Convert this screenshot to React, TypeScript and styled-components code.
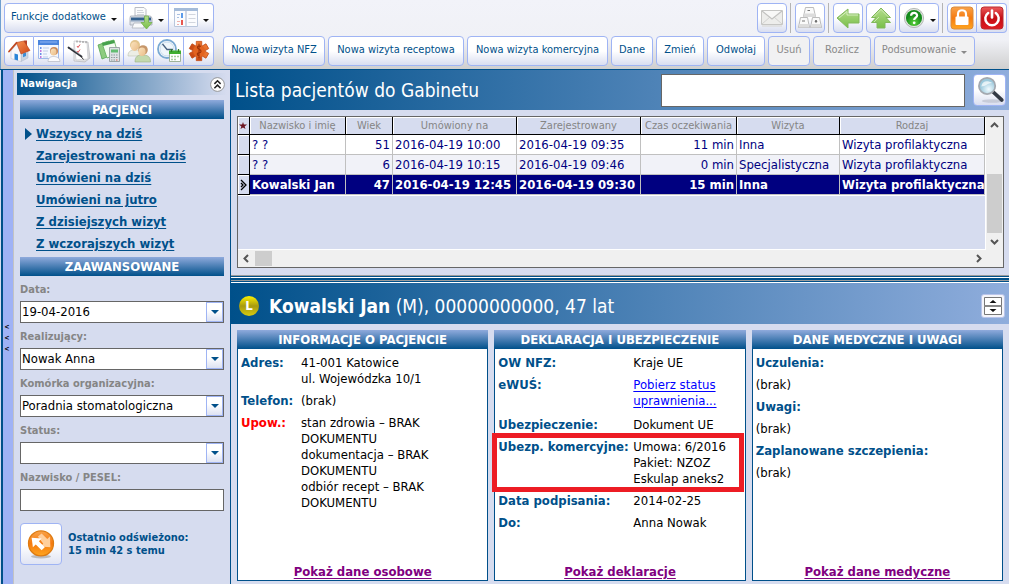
import React from "react";
import styled, { createGlobalStyle, css } from "styled-components";

const navy = "#00508a";
const panel = "#d6dcef";
const edge = "#9fb4f4";

const Global = createGlobalStyle`
  *, *::before, *::after { box-sizing: border-box; }
  html, body { margin: 0; height: 100%; }
  body {
    background: ${panel};
    font-family: "DejaVu Sans Condensed", Tahoma, "DejaVu Sans", sans-serif;
    font-size: 13px;
    line-height: 16px;
    color: #000;
  }
  button, input, select { font: inherit; color: inherit; margin: 0; }
  svg { display: block; }
`;

const Page = styled.div`
  display: flex;
  flex-direction: column;
  min-height: 100vh;
`;

/* ---------- toolbars ---------- */

const Toolbars = styled.header`
  display: flex;
  flex-direction: column;
  gap: 3px;
  padding: 3px 2px 3px 3px;
  border-left: 1px solid #6f9fd0;
  background: linear-gradient(#f2f3f9 0, #f0f1f6 40px, #cfcfcf 100%);
`;

const ToolRow = styled.div`
  display: flex;
  align-items: center;
  height: 30px;
  gap: 3px;
`;

const Spacer = styled.div<{ $w?: number }>`
  ${(p) => (p.$w ? `width: ${p.$w}px;` : "flex: 1;")}
`;

const Separator = styled.div`
  width: 1px;
  height: 30px;
  margin-right: 1px;
  background: #b4b4b4;
`;

const ToolButton = styled.button<{ $w?: number }>`
  display: flex;
  align-items: center;
  justify-content: center;
  gap: 5px;
  height: 30px;
  ${(p) => p.$w && `width: ${p.$w}px;`}
  flex: none;
  padding: 0 4px 2px;
  border: 1px solid ${edge};
  border-radius: 4px;
  background: linear-gradient(#fff 50%, #d9def0);
  font-size: 11px;
  line-height: 16px;
  white-space: nowrap;
  color: ${navy};
  &:disabled {
    background: #f1f1f2;
    color: #8a8a8a;
  }
`;

const IconButton = styled(ToolButton)`
  width: ${(p) => p.$w ?? 30}px;
  padding: 0;
`;

const ButtonGroup = styled.div`
  display: flex;
  > button { border-radius: 0; }
  > button:not(:first-child) { border-left: 0; }
  > button:first-child { border-radius: 4px 0 0 4px; }
  > button:last-child { border-radius: 0 4px 4px 0; }
`;

const Caret = styled.span`
  width: 0;
  height: 0;
  margin-top: 4px;
  border: 3px solid transparent;
  border-top-color: currentColor;
  border-bottom: 0;
`;

const DarkCaret = styled(Caret)`
  border-top-color: #111;
`;

/* ---------- work area ---------- */

const Work = styled.div`
  display: flex;
  flex: 1;
  padding-left: 1px;
  border-top: 1px solid ${navy};
`;

const Collapse = styled.button`
  display: flex;
  flex-direction: column;
  align-items: center;
  justify-content: center;
  width: 13px;
  padding: 22px 2px 0 0;
  border: solid #c3c3c3;
  border-width: 0 1px;
  border-left: 2px solid ${navy};
  background: #9fb2f5;
  font-size: 7px;
  line-height: 11px;
  font-weight: bold;
`;

const Sidebar = styled.aside`
  display: flex;
  flex-direction: column;
  width: 216px;
  padding: 3px 3px 0;
`;

const SideHead = styled.div`
  display: flex;
  align-items: center;
  justify-content: space-between;
  height: 22px;
  padding: 0 2px 0 3px;
  background: linear-gradient(to right, ${navy}, ${panel});
  color: #fff;
  font-size: 11px;
  font-weight: bold;
`;

const RoundButton = styled.button`
  display: flex;
  width: 15px;
  height: 15px;
  padding: 0;
  border: 0;
  background: none;
`;

const SideBody = styled.div`
  display: flex;
  flex-direction: column;
  padding: 5px 3px 0;
`;

const SectionBar = styled.h2`
  margin: 0;
  height: 19px;
  background: linear-gradient(#8faadc, ${navy});
  color: #fff;
  text-align: center;
  font-size: 13px;
  line-height: 19px;
  font-weight: bold;
  white-space: nowrap;
`;

const NavList = styled.ul`
  margin: 0;
  padding: 4px 0 2px 5px;
  list-style: none;
`;

const NavItem = styled.li<{ $active?: boolean }>`
  display: flex;
  align-items: center;
  height: 22px;
  &::before {
    content: "";
    width: 11px;
    border: 6px solid transparent;
    border-right: 0;
    border-left: 7px solid ${(p) => (p.$active ? navy : "transparent")};
  }
`;

const NavLink = styled.a`
  color: ${navy};
  font-weight: bold;
  text-underline-offset: 2px;
`;

const Filters = styled.form`
  display: flex;
  flex-direction: column;
`;

const FieldLabel = styled.label`
  height: 25px;
  padding-top: 6px;
  color: #858585;
  font-size: 11px;
  font-weight: bold;
`;

const fieldBox = css`
  width: 100%;
  height: 22px;
  border: 1px solid #666;
  border-radius: 0;
  background: #fff;
`;

const SelectBox = styled.div`
  position: relative;
  display: flex;
`;

const Select = styled.select`
  ${fieldBox}
  appearance: none;
  padding: 0 20px 0 1px;
  font-size: 13px;
`;

const DropMark = styled.span`
  position: absolute;
  top: 1px;
  right: 1px;
  bottom: 1px;
  display: flex;
  align-items: center;
  justify-content: center;
  width: 17px;
  border: 1px solid ${edge};
  background: linear-gradient(#fff 40%, #dde2f2);
  pointer-events: none;
  &::after {
    content: "";
    border: 4px solid transparent;
    border-top-color: ${navy};
    border-bottom: 0;
  }
`;

const TextInput = styled.input`
  ${fieldBox}
  padding: 0 3px;
`;

const Refresh = styled.div`
  display: flex;
  align-items: center;
  gap: 6px;
  padding-top: 12px;
  color: ${navy};
  font-size: 11px;
  line-height: 13px;
  font-weight: bold;
`;

const RefreshButton = styled(IconButton)`
  width: 42px;
  height: 42px;
  background: linear-gradient(#fff 50%, #e0e4f3);
`;

const Main = styled.main`
  display: flex;
  flex: 1;
  flex-direction: column;
  min-width: 0;
  border-left: 1px solid ${navy};
`;

const Banner = styled.div`
  display: flex;
  align-items: center;
  height: 40px;
  padding: 0 3px 0 4px;
  background: linear-gradient(to right, ${navy}, #8faddc);
  color: #fff;
`;

const Heading = styled.h1`
  flex: 1;
  margin: 0;
  font-size: 19px;
  line-height: 24px;
  font-weight: normal;
  white-space: nowrap;
`;

const SearchInput = styled.input`
  width: 304px;
  height: 33px;
  margin-right: 8px;
  padding: 0 6px;
  border: 1px solid #666;
  background: #fff;
  color: #000;
`;

const SearchButton = styled(IconButton)`
  width: 33px;
  height: 32px;
`;

/* ---------- patient list ---------- */

const ListArea = styled.section`
  padding: 6px 5px 7px 6px;
`;

const ListFrame = styled.div`
  display: grid;
  grid-template-columns: minmax(0, 1fr) 17px;
  grid-template-rows: 133px 17px;
  border: 1px solid #666;
  overflow: hidden;
`;

const TableView = styled.div`
  overflow: hidden;
  border-right: 1px solid #fff;
  border-bottom: 1px solid #fff;
`;

const Table = styled.table`
  width: 100%;
  table-layout: fixed;
  border-collapse: separate;
  border-spacing: 0;
  border-bottom: 1px solid #fff;
`;

const HeadCell = styled.th`
  height: 18px;
  padding: 0;
  overflow: hidden;
  border-right: 1px solid #000;
  border-bottom: 1px solid #000;
  box-shadow: inset 1px 1px #fff;
  color: #858585;
  font-size: 11px;
  line-height: 16px;
  font-weight: normal;
  white-space: nowrap;
`;

const Row = styled.tr<{ $alt?: boolean; $selected?: boolean }>`
  background: ${(p) => (p.$selected ? "#000080" : p.$alt ? "#f1f2f8" : "#fff")};
  color: ${(p) => (p.$selected ? "#fff" : "#000080")};
  font-weight: ${(p) => (p.$selected ? "bold" : "normal")};
`;

const Cell = styled.td<{ $right?: boolean }>`
  height: 20px;
  padding: 1px 2px 0;
  overflow: hidden;
  border-right: 1px solid #c0c0c0;
  border-bottom: 1px solid #c0c0c0;
  font-size: 13px;
  line-height: 16px;
  text-align: ${(p) => (p.$right ? "right" : "left")};
  white-space: nowrap;
`;

const Marker = styled.td`
  padding: 0 0 0 2px;
  border-right: 1px solid #000;
  border-bottom: 1px solid #000;
  box-shadow: inset 1px 1px #fff;
  background: ${panel};
`;

const ScrollV = styled.div`
  display: flex;
  flex-direction: column;
  align-items: center;
  justify-content: space-between;
  padding: 4px 1px;
  background: #f0f0f0;
`;

const ThumbV = styled.div`
  width: 15px;
  height: 59px;
  margin-top: 40px;
  background: #cdcdcd;
`;

const ScrollH = styled.div`
  display: flex;
  grid-column: 1 / -1;
  align-items: center;
  gap: 4px;
  padding: 0 20px 0 4px;
  background: #f0f0f0;
`;

const ThumbH = styled.div`
  width: 17px;
  height: 15px;
  background: #cdcdcd;
`;

/* ---------- patient card ---------- */

const Splitter = styled.div`
  height: 8px;
  background: linear-gradient(
    #9a9a9a 1px, ${navy} 1px 2px, #fff 2px 3px, ${navy} 3px 5px,
    #9a9a9a 5px 6px, ${navy} 6px 7px, #fff 7px
  );
`;

const PatientBanner = styled(Banner)`
  height: 41px;
  padding: 4px 4px 0 8px;
  gap: 10px;
`;

const Badge = styled.span`
  display: flex;
  align-items: center;
  justify-content: center;
  width: 20px;
  height: 20px;
  border-radius: 50%;
  background: linear-gradient(#fff200, #a79a10 50%, #d8cc10);
  color: #fff;
  font-size: 13px;
  font-weight: bold;
`;

const SpinButton = styled.button`
  display: flex;
  align-items: center;
  justify-content: center;
  width: 24px;
  height: 24px;
  padding: 0;
  border: 1px solid #b8c4ea;
  border-radius: 3px;
  background: #f4f5fa;
`;

const Cards = styled.section`
  display: grid;
  flex: 1;
  grid-template-columns: repeat(3, minmax(0, 1fr));
  gap: 6px;
  padding: 6px 6px 3px;
`;

const Card = styled.article`
  display: flex;
  flex-direction: column;
`;

const CardBody = styled.div`
  display: flex;
  flex: 1;
  flex-direction: column;
  padding: 3px 3px 0;
  border: 1px solid ${navy};
  border-top: 0;
  background: #fff;
`;

const Facts = styled.dl<{ $label: number }>`
  display: grid;
  grid-template-columns: ${(p) => (p.$label ? `${p.$label}px minmax(0, 1fr)` : "1fr")};
  margin: 0;
`;

const FactRow = styled.div<{ $marked?: boolean }>`
  position: relative;
  display: grid;
  grid-column: 1 / -1;
  grid-template-columns: subgrid;
  ${(p) =>
    p.$marked &&
    css`
      &::after {
        content: "";
        position: absolute;
        inset: -3px -2px -2px -6px;
        border: 5px solid #ed1c24;
        pointer-events: none;
      }
    `}
`;

const Term = styled.dt<{ $alert?: boolean }>`
  padding: 3px 0;
  color: ${(p) => (p.$alert ? "#f00" : navy)};
  font-weight: bold;
  white-space: nowrap;
`;

const Detail = styled.dd`
  margin: 0;
  padding: 3px 0;
  white-space: pre-line;
`;

const StatusLink = styled.a`
  display: inline-block;
  padding-bottom: 2px;
  color: #00f;
  text-underline-offset: 2px;
`;

const CardLink = styled.a`
  margin: auto auto 0;
  color: #800080;
  line-height: 16px;
  font-weight: bold;
  text-underline-offset: 2px;
`;

/* ---------- drawings ---------- */

const Icon = ({ size = 24, children }: { size?: number; children: React.ReactNode }) => (
  <svg width={size} height={size} viewBox="0 0 24 24" aria-hidden="true">
    {children}
  </svg>
);

const Gradients = () => (
  <svg width="0" height="0" style={{ position: "absolute" }} aria-hidden="true">
    <defs>
      <linearGradient id="green" x1="0" y1="0" x2="0" y2="1">
        <stop offset="0" stopColor="#b5dd8d" />
        <stop offset="1" stopColor="#78bf48" />
      </linearGradient>
      <linearGradient id="orange" x1="0" y1="0" x2="0" y2="1">
        <stop offset="0" stopColor="#f9a34a" />
        <stop offset="0.5" stopColor="#f57a10" />
        <stop offset="1" stopColor="#ffa51f" />
      </linearGradient>
      <linearGradient id="red" x1="0" y1="0" x2="0" y2="1">
        <stop offset="0" stopColor="#ec5a5a" />
        <stop offset="0.5" stopColor="#c40d14" />
        <stop offset="1" stopColor="#df1b20" />
      </linearGradient>
      <linearGradient id="roof" x1="0" y1="0" x2="1" y2="1">
        <stop offset="0" stopColor="#f79252" />
        <stop offset="1" stopColor="#cf4516" />
      </linearGradient>
      <linearGradient id="medic" gradientUnits="userSpaceOnUse" x1="4" y1="2" x2="18" y2="22">
        <stop offset="0" stopColor="#f5833a" />
        <stop offset="1" stopColor="#c23f0c" />
      </linearGradient>
      <linearGradient id="paper" x1="0" y1="0" x2="1" y2="1">
        <stop offset="0" stopColor="#fff" />
        <stop offset="1" stopColor="#d4d4d4" />
      </linearGradient>
      <radialGradient id="lens" cx="0.6" cy="0.7">
        <stop offset="0" stopColor="#f2fbff" />
        <stop offset="1" stopColor="#9cc9dc" />
      </radialGradient>
      <radialGradient id="helpGreen" cx="0.5" cy="0.8">
        <stop offset="0" stopColor="#5ed43c" />
        <stop offset="1" stopColor="#148a1c" />
      </radialGradient>
      <linearGradient id="skin" x1="0" y1="0" x2="1" y2="1">
        <stop offset="0" stopColor="#fbe3bd" />
        <stop offset="1" stopColor="#e9bc88" />
      </linearGradient>
    </defs>
  </svg>
);

const PrinterIcon = () => (
  <Icon>
    <path d="M6 1.500h9l2 2V10H6z" fill="#fafbfc" stroke="#b9bcc4" />
    <path d="M8 4.500h6M8 6.500h7M8 8.500h7" stroke="#d2d5dc" />
    <path d="M1.500 10h20l1.500 2v7H1v-7z" fill="#dfe3ea" stroke="#a1a7b2" strokeWidth=".8" />
    <path d="M2 11.500h20v3H2z" fill="#35618f" />
    <path d="M1.500 15h21" stroke="#8fa5bf" />
    <path d="M5 17h10v5H3z" fill="#f9fafb" stroke="#a5aab5" strokeWidth=".7" />
    <path d="M15.500 10h4v6.500H23L17.500 23 12 16.500h3.500z" fill="url(#green)" stroke="#74b04c" strokeWidth=".8" />
  </Icon>
);

const BookIcon = () => (
  <Icon>
    <path d="M.5 3.500h23v17H.500z" fill="#fbfcfe" stroke="#b9c6dc" />
    <path d="M0 2h24v3H0z" fill="#a4bbd9" />
    <path d="M12 5v16" stroke="#c0cadb" strokeWidth="1.500" />
    <path d="M14.500 8.500h7M14.500 12.500h7M14.500 16.500h7" stroke="#d2d6de" />
    <path d="M3 8.500h3M3 11.500h2" stroke="#a9bfe0" />
    <path d="M3 15.500h3M3 18.500h2" stroke="#efb1ac" />
    <path d="M7 7h2v5H7z" fill="#5b9bea" />
    <path d="M7 14h2v5H7z" fill="#e8574f" />
  </Icon>
);

const HomeIcon = () => (
  <Icon>
    <path d="M14 14l7-2.500v7.500l-7 3.500z" fill="#cbd5e2" stroke="#a9b5c6" strokeWidth=".5" />
    <path d="M4 12l5.500-7L14 14v8.500L4 19.500z" fill="#f8f8fa" stroke="#b8bfca" strokeWidth=".5" />
    <path d="M7.500 14.500l3.500 1v6l-3.500-1z" fill="#2a86d8" />
    <path d="M16 14.500l3-1v3.500l-3 1.200z" fill="#3d8fd8" />
    <path d="M17 1.500h3v6h-3z" fill="#b5422b" />
    <path d="M9.500 3.500L17 2l6 9.500-9 3.500z" fill="url(#roof)" stroke="#b7421d" strokeWidth=".6" />
    <path d="M9.500 3.800L2 12.500" stroke="#c04a22" strokeWidth="1.800" strokeLinecap="round" />
  </Icon>
);

const CardIcon = () => (
  <Icon>
    <path d="M1.500 1.500h20v18h-20z" fill="#f4f8ff" stroke="#9db9ea" />
    <path d="M1 1h21v5H1z" fill="#4c86dd" />
    <path d="M3 3h17" stroke="#8fb4f2" />
    <path d="M6 9h6M6 12h5M6 15h4M6 18h5" stroke="#bdcce6" />
    <path d="M3 9h1.500M3 15h1.500" stroke="#3b6fe0" strokeWidth="1.500" />
    <path d="M3 12h1.500M3 18h1.500" stroke="#b04fd0" strokeWidth="1.500" />
    <circle cx="17" cy="12" r="4" fill="#c98a5a" />
    <ellipse cx="16.500" cy="13" rx="3" ry="3.600" fill="url(#skin)" />
    <path d="M11 22.500c0-4 3-5 5.500-5s6.500 1 6.500 5z" fill="#fbfbfd" stroke="#b5b8c3" strokeWidth=".7" />
  </Icon>
);

const NotesIcon = () => (
  <Icon>
    <path d="M7 4l14-1 2 16-5 4-11-1z" fill="url(#paper)" stroke="#b4b6bc" strokeWidth=".7" />
    <path d="M7 2l13 1 1 17-12 1z" fill="#fff" stroke="#c4c6cc" strokeWidth=".7" />
    <path d="M10 1.500v2M13 1.700v2M16 2v2M19 2.200v2" stroke="#888" />
    <path d="M10 7l1 1.500 2-3M10 12l1 1.500 2-3" fill="none" stroke="#e0555a" />
    <path d="M1.500 8.500l13 9" stroke="#2e3138" strokeWidth="1.800" strokeLinecap="round" />
    <path d="M4 9l9 6.500" stroke="#9ea3ac" strokeWidth=".7" />
    <path d="M14 17.500l2.500 3" stroke="#333" />
  </Icon>
);

const CalcIcon = () => (
  <Icon>
    <path d="M1 6l11-4 3 14-10 4z" fill="#8dcc7f" stroke="#57a556" strokeWidth=".8" />
    <path d="M5 4l12-3 4 14-11 4z" fill="#f4fcf2" stroke="#5fae59" strokeWidth=".8" />
    <path d="M5 4l12-3 .8 3L6 7z" fill="#45a14c" />
    <path d="M12.500 8.500h10v14h-10z" fill="#dde2e4" stroke="#8a9698" strokeWidth=".8" />
    <path d="M14 10.500h7v3h-7z" fill="#62bd72" />
    <path d="M14 16h1.500M16.500 16H18M19 16h1.500M14 18.500h1.500M16.500 18.500H18M19 18.500h1.500M14 21h1.500M16.500 21H18" stroke="#8e9a9d" strokeWidth="1.200" />
    <path d="M19 21h1.500" stroke="#e0574f" strokeWidth="1.200" />
  </Icon>
);

const PeopleIcon = () => (
  <Icon>
    <path d="M1 17c0-5 3-6 7-6s7 1 7 6z" fill="#eceee6" stroke="#bcc2b2" strokeWidth=".6" />
    <circle cx="8" cy="6" r="5" fill="#e3c58e" />
    <ellipse cx="7.500" cy="7.500" rx="3.600" ry="4.400" fill="url(#skin)" />
    <path d="M8 23c0-6 3-7 7.500-7s8 1 8 7z" fill="#c3d9ad" stroke="#98b084" strokeWidth=".6" />
    <circle cx="16" cy="11" r="4.800" fill="#c69669" />
    <ellipse cx="15" cy="12.800" rx="3.600" ry="4.300" fill="url(#skin)" />
  </Icon>
);

const ClockIcon = () => (
  <Icon>
    <circle cx="10" cy="10" r="9" fill="#fff" stroke="#7aa9d2" strokeWidth="1.800" />
    <circle cx="10" cy="10" r="7" fill="#eff6fb" stroke="#c9dcec" />
    <path d="M5.500 5l4.500 5.500h6" fill="none" stroke="#48617f" strokeWidth="1.300" />
    <path d="M12.500 12.500h11v10h-11z" fill="#fff" stroke="#9fb39a" />
    <path d="M12 11.500h12V15H12z" fill="#3fae30" />
    <path d="M14.500 10v3M21.500 10v3" stroke="#2f7d24" strokeWidth="1.300" />
    <path d="M14 17.500h8M14 20.500h6" stroke="#a9cba0" strokeWidth="1.500" strokeDasharray="2 1" />
  </Icon>
);

const StarOfLifeIcon = () => (
  <Icon size={22}>
    <g fill="url(#medic)" stroke="#c14812" strokeWidth=".8" strokeLinejoin="round">
      <path d="M9 1.500h6v21H9z" />
      <path d="M9 1.500h6v21H9z" transform="rotate(60 12 12)" />
      <path d="M9 1.500h6v21H9z" transform="rotate(120 12 12)" />
    </g>
    <circle cx="12" cy="12" r="6.500" fill="#e2631f" />
    <path d="M12 4v16M14 7c-4-2-5 2-2 3s3 4 0 4-2 3 0 3" fill="none" stroke="#9c3208" strokeWidth="1.200" />
  </Icon>
);

const MailIcon = () => (
  <Icon>
    <path d="M1.500 4.500h21v14h-21z" fill="#ededeb" stroke="#c6c6c4" />
    <path d="M2 18l8-7M22 18l-8-7" stroke="#d2d2d0" />
    <path d="M2 5l10 8L22 5" fill="#f8f8f7" stroke="#c2c2c0" strokeWidth="1.200" />
    <path d="M2 20h20" stroke="#dededc" strokeWidth="1.500" />
  </Icon>
);

const KeysIcon = () => (
  <Icon>
    <g fill="#fafafa" stroke="#b4b4b4" strokeWidth=".9">
      <path d="M7.500 1.500h8l2 9h-12z" />
      <path d="M2.500 11.500h7l2 10h-11z" />
      <path d="M14.500 11.500h7l2 10h-11z" />
    </g>
    <g fill="#dcdcdc">
      <path d="M6 7.500h11l.5 3.500h-12z" />
      <path d="M1.500 18h9l.5 3.500H1z" />
      <path d="M13.500 18h9l.5 3.500H13z" />
    </g>
    <path d="M9.500 4.500H12M4 15h3M17 16l1-2 1 2z" stroke="#777" />
  </Icon>
);

const LeftIcon = () => (
  <Icon>
    <path d="M1 12L12 3v5h11v9H12v5z" fill="url(#green)" stroke="#82b95c" />
    <path d="M3 12l8-6.500V9h11" fill="none" stroke="#d5edbf" />
  </Icon>
);

const UpIcon = () => (
  <Icon>
    <path d="M12 2l9.500 9.500h-4.500l4.500 5h-5.500V22H8v-5.500H2.500l4.500-5H2.500z" fill="url(#green)" stroke="#82b95c" />
    <path d="M4.500 11L12 3.500l7.500 7.500M5 16l5-5" fill="none" stroke="#d5edbf" strokeWidth=".8" />
  </Icon>
);

const HelpIcon = () => (
  <Icon size={22}>
    <circle cx="12" cy="12" r="10.500" fill="#e2e5e2" stroke="#9da49d" strokeWidth=".8" />
    <circle cx="12" cy="12" r="8.800" fill="url(#helpGreen)" />
    <path d="M8.800 9.500c.2-4 6.600-4 6.600-.3 0 2.300-3.200 2.400-3.200 5" fill="none" stroke="#fff" strokeWidth="2.400" />
    <circle cx="12.200" cy="17.300" r="1.500" fill="#fff" />
  </Icon>
);

const LockIcon = () => (
  <Icon>
    <rect x="1" y="1" width="22" height="22" rx="3" fill="url(#orange)" stroke="#d98a3d" />
    <path d="M8 11V8c0-5 8-5 8 0v3" fill="none" stroke="#fff" strokeWidth="2.200" />
    <rect x="5.500" y="10.500" width="13" height="8.500" rx="1" fill="#fff" />
  </Icon>
);

const PowerIcon = () => (
  <Icon>
    <rect x="1" y="1" width="22" height="22" rx="3" fill="url(#red)" stroke="#b92b30" />
    <path d="M8.200 7a6.700 6.700 0 1 0 7.600 0" fill="none" stroke="#fff" strokeWidth="2.500" strokeLinecap="round" />
    <path d="M12 4.500v7" stroke="#fff" strokeWidth="2.600" strokeLinecap="round" />
  </Icon>
);

const SearchIcon = () => (
  <Icon size={28}>
    <ellipse cx="14" cy="21.500" rx="9" ry="1.500" fill="#a9b0bd" opacity=".5" />
    <path d="M14.500 13.500l7.500 7" stroke="#333a44" strokeWidth="3.200" strokeLinecap="round" />
    <circle cx="9.500" cy="8.500" r="7" fill="url(#lens)" stroke="#a4a9b0" strokeWidth="1.500" />
    <path d="M4.500 9c1-5 5-5.500 9.500-3-4 0-6 3-9.500 3z" fill="#fff" opacity=".7" />
  </Icon>
);

const SwapIcon = () => (
  <Icon size={30}>
    <ellipse cx="12" cy="22" rx="8" ry="1.500" fill="#9a9a9a" opacity=".6" />
    <circle cx="12" cy="11.500" r="10" fill="url(#orange)" stroke="#dd7b12" />
    <path d="M9.500 6l3-2.500 4.500 4.500 2.200-2 .3 8.500-8-.5 2.300-2.300z" fill="#ffcf9c" />
    <path d="M4.500 7l8 .5-2.200 2.300 4.700 4.700-2.500 2.500-4.700-4.700-2.300 2.200z" fill="#fff" />
  </Icon>
);

const RollUpIcon = () => (
  <Icon size={15}>
    <circle cx="12" cy="12" r="11" fill="#fff" stroke="#8a8a8a" strokeWidth="1.400" />
    <path d="M7 11l5-5 5 5M7 18l5-5 5 5" fill="none" stroke="#222" strokeWidth="2.400" />
  </Icon>
);

const SpinIcon = () => (
  <svg width="18" height="18" viewBox="0 0 18 18" aria-hidden="true">
    <path d="M.5.500h17v17H.500z" fill="#fff" stroke="#777" />
    <path d="M0 9h18" stroke="#888" strokeWidth="2" />
    <path d="M5.500 6L9 3l3.500 3zM5.500 12L9 15l3.500-3z" fill="#111" />
  </svg>
);

const arrows = {
  up: "M1 6l3.500-3.500L8 6",
  down: "M1 3l3.500 3.500L8 3",
  left: "M6 1L2.500 4.500 6 8",
  right: "M3 1l3.500 3.500L3 8",
};

const Arrow = ({ to }: { to: keyof typeof arrows }) => (
  <svg width="9" height="9" viewBox="0 0 9 9" aria-hidden="true">
    <path d={arrows[to]} fill="none" stroke="#555" strokeWidth="2" />
  </svg>
);

const RowPointer = () => (
  <svg width="8" height="12" viewBox="0 0 8 12" aria-hidden="true">
    <path d="M1 1l5 5-5 5M1 4l2 2-2 2" fill="none" stroke="#000" strokeWidth="1.300" />
  </svg>
);

const StarMark = () => (
  <svg width="10" height="9" viewBox="0 0 10 10" aria-label="Wyróżnienie">
    <path d="M5 1l1 3h3.500L6.800 6l1 3L5 7.200 2.200 9l1-3L.500 4H4z" fill="#6b1420" />
  </svg>
);

/* ---------- content ---------- */

const shortcuts = [
  { name: "Start", icon: <HomeIcon /> },
  { name: "Kartoteka", icon: <CardIcon /> },
  { name: "Notatki", icon: <NotesIcon /> },
  { name: "Rozliczenia", icon: <CalcIcon /> },
  { name: "Pacjenci", icon: <PeopleIcon /> },
  { name: "Terminarz", icon: <ClockIcon /> },
  { name: "Ratownictwo", icon: <StarOfLifeIcon /> },
];

const actions = [
  { text: "Nowa wizyta NFZ", w: 102 },
  { text: "Nowa wizyta receptowa", w: 136 },
  { text: "Nowa wizyta komercyjna", w: 141 },
  { text: "Dane", w: 42 },
  { text: "Zmień", w: 48 },
  { text: "Odwołaj", w: 58 },
  { text: "Usuń", w: 42, off: true },
  { text: "Rozlicz", w: 58, off: true },
  { text: "Podsumowanie", w: 101, off: true, menu: true },
];

const views = [
  "Wszyscy na dziś",
  "Zarejestrowani na dziś",
  "Umówieni na dziś",
  "Umówieni na jutro",
  "Z dzisiejszych wizyt",
  "Z wczorajszych wizyt",
];

const filters = [
  { id: "data", label: "Data:", value: "19-04-2016" },
  { id: "realizujacy", label: "Realizujący:", value: "Nowak Anna" },
  { id: "komorka", label: "Komórka organizacyjna:", value: "Poradnia stomatologiczna" },
  { id: "status", label: "Status:", value: "" },
];

const columns = [
  { title: "Nazwisko i imię", w: 96 },
  { title: "Wiek", w: 47, right: true },
  { title: "Umówiony na", w: 124 },
  { title: "Zarejestrowany", w: 124 },
  { title: "Czas oczekiwania", w: 96, right: true },
  { title: "Wizyta", w: 103 },
  { title: "Rodzaj" },
];

const visits = [
  ["? ?", "51", "2016-04-19 10:00", "2016-04-19 09:35", "11 min", "Inna", "Wizyta profilaktyczna"],
  ["? ?", "6", "2016-04-19 10:15", "2016-04-19 09:46", "0 min", "Specjalistyczna", "Wizyta profilaktyczna"],
  ["Kowalski Jan", "47", "2016-04-19 12:45", "2016-04-19 09:30", "15 min", "Inna", "Wizyta profilaktyczna"],
];

type Fact = { term: string; detail: React.ReactNode; alert?: boolean; marked?: boolean };

const cards: { title: string; label: number; link: string; facts: Fact[] }[] = [
  {
    title: "INFORMACJE O PACJENCIE",
    label: 60,
    link: "Pokaż dane osobowe",
    facts: [
      { term: "Adres:", detail: "41-001 Katowice\nul. Wojewódzka 10/1" },
      { term: "Telefon:", detail: "(brak)" },
      {
        term: "Upow.:",
        alert: true,
        detail: "stan zdrowia – BRAK\nDOKUMENTU\ndokumentacja – BRAK\nDOKUMENTU\nodbiór recept – BRAK\nDOKUMENTU",
      },
    ],
  },
  {
    title: "DEKLARACJA I UBEZPIECZENIE",
    label: 135,
    link: "Pokaż deklaracje",
    facts: [
      { term: "OW NFZ:", detail: "Kraje UE" },
      { term: "eWUŚ:", detail: <StatusLink href="#ewus">{"Pobierz status\nuprawnienia..."}</StatusLink> },
      { term: "Ubezpieczenie:", detail: "Dokument UE" },
      { term: "Ubezp. komercyjne:", detail: "Umowa: 6/2016\nPakiet: NZOZ\nEskulap aneks2", marked: true },
      { term: "Data podpisania:", detail: "2014-02-25" },
      { term: "Do:", detail: "Anna Nowak" },
    ],
  },
  {
    title: "DANE MEDYCZNE I UWAGI",
    label: 0,
    link: "Pokaż dane medyczne",
    facts: [
      { term: "Uczulenia:", detail: "(brak)" },
      { term: "Uwagi:", detail: "(brak)" },
      { term: "Zaplanowane szczepienia:", detail: "(brak)" },
    ],
  },
];

export default function App() {
  return (
    <>
      <Global />
      <Gradients />
      <Page>
        <Toolbars>
          <ToolRow>
            <ButtonGroup>
              <ToolButton $w={120}>
                Funkcje dodatkowe <DarkCaret />
              </ToolButton>
              <IconButton $w={45} aria-label="Drukuj">
                <PrinterIcon />
                <DarkCaret />
              </IconButton>
              <IconButton $w={45} aria-label="Widok">
                <BookIcon />
                <DarkCaret />
              </IconButton>
            </ButtonGroup>
            <Spacer />
            <IconButton aria-label="Wiadomości"><MailIcon /></IconButton>
            <Separator />
            <IconButton aria-label="Skróty klawiszowe"><KeysIcon /></IconButton>
            <Separator />
            <IconButton aria-label="Wstecz"><LeftIcon /></IconButton>
            <IconButton aria-label="W górę"><UpIcon /></IconButton>
            <IconButton $w={40} aria-label="Pomoc">
              <HelpIcon />
              <DarkCaret />
            </IconButton>
            <Separator />
            <ButtonGroup>
              <IconButton aria-label="Zablokuj"><LockIcon /></IconButton>
              <IconButton aria-label="Zakończ"><PowerIcon /></IconButton>
            </ButtonGroup>
          </ToolRow>
          <ToolRow>
            <ButtonGroup>
              {shortcuts.map((s) => (
                <IconButton key={s.name} aria-label={s.name}>{s.icon}</IconButton>
              ))}
            </ButtonGroup>
            <Spacer $w={3} />
            {actions.map((a) => (
              <ToolButton key={a.text} $w={a.w} disabled={a.off}>
                {a.text}
                {a.menu && <Caret />}
              </ToolButton>
            ))}
          </ToolRow>
        </Toolbars>

        <Work>
          <Collapse aria-label="Zwiń panel">
            <span>&lt;</span>
            <span>&lt;</span>
            <span>&lt;</span>
          </Collapse>
          <Sidebar>
            <SideHead>
              Nawigacja
              <RoundButton aria-label="Zwiń nawigację"><RollUpIcon /></RoundButton>
            </SideHead>
            <SideBody>
              <SectionBar>PACJENCI</SectionBar>
              <NavList>
                {views.map((v, i) => (
                  <NavItem key={v} $active={i === 0}>
                    <NavLink href="#lista">{v}</NavLink>
                  </NavItem>
                ))}
              </NavList>
              <SectionBar>ZAAWANSOWANE</SectionBar>
              <Filters>
                {filters.map((f) => (
                  <React.Fragment key={f.id}>
                    <FieldLabel htmlFor={f.id}>{f.label}</FieldLabel>
                    <SelectBox>
                      <Select id={f.id} defaultValue={f.value}>
                        <option>{f.value}</option>
                      </Select>
                      <DropMark />
                    </SelectBox>
                  </React.Fragment>
                ))}
                <FieldLabel htmlFor="pesel">Nazwisko / PESEL:</FieldLabel>
                <TextInput id="pesel" />
              </Filters>
              <Refresh>
                <RefreshButton aria-label="Odśwież"><SwapIcon /></RefreshButton>
                <div>
                  Ostatnio odświeżono:
                  <br />
                  15 min 42 s temu
                </div>
              </Refresh>
            </SideBody>
          </Sidebar>

          <Main>
            <Banner>
              <Heading>Lista pacjentów do Gabinetu</Heading>
              <SearchInput aria-label="Szukaj pacjenta" />
              <SearchButton aria-label="Szukaj"><SearchIcon /></SearchButton>
            </Banner>
            <ListArea id="lista">
              <ListFrame>
                <TableView>
                  <Table>
                    <colgroup>
                      <col width={12} />
                      {columns.map((c) => (
                        <col key={c.title} width={c.w} />
                      ))}
                    </colgroup>
                    <thead>
                      <tr>
                        <HeadCell><StarMark /></HeadCell>
                        {columns.map((c) => (
                          <HeadCell key={c.title} scope="col">{c.title}</HeadCell>
                        ))}
                      </tr>
                    </thead>
                    <tbody>
                      {visits.map((v, i) => (
                        <Row key={v[2]} $alt={i === 1} $selected={i === 2}>
                          <Marker>{i === 2 && <RowPointer />}</Marker>
                          {v.map((text, c) => (
                            <Cell key={c} $right={columns[c].right}>{text}</Cell>
                          ))}
                        </Row>
                      ))}
                    </tbody>
                  </Table>
                </TableView>
                <ScrollV>
                  <Arrow to="up" />
                  <ThumbV />
                  <Arrow to="down" />
                </ScrollV>
                <ScrollH>
                  <Arrow to="left" />
                  <ThumbH />
                  <Spacer />
                  <Arrow to="right" />
                </ScrollH>
              </ListFrame>
            </ListArea>
            <Splitter />
            <PatientBanner>
              <Badge>L</Badge>
              <Heading as="h2">
                <b>Kowalski Jan</b> (M), 00000000000, 47 lat
              </Heading>
              <SpinButton aria-label="Zmień wysokość"><SpinIcon /></SpinButton>
            </PatientBanner>
            <Cards>
              {cards.map((card) => (
                <Card key={card.title}>
                  <SectionBar>{card.title}</SectionBar>
                  <CardBody>
                    <Facts $label={card.label}>
                      {card.facts.map((f) => (
                        <FactRow key={f.term} $marked={f.marked}>
                          <Term $alert={f.alert}>{f.term}</Term>
                          <Detail>{f.detail}</Detail>
                        </FactRow>
                      ))}
                    </Facts>
                    <CardLink href="#karta">{card.link}</CardLink>
                  </CardBody>
                </Card>
              ))}
            </Cards>
          </Main>
        </Work>
      </Page>
    </>
  );
}
